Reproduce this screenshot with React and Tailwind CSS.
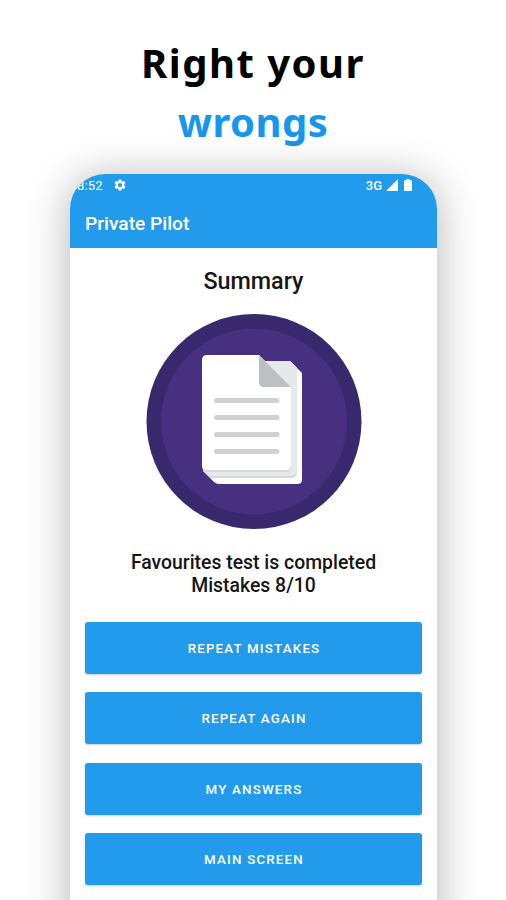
import React from 'react';
import { MdSettings } from 'react-icons/md';

const ACTIONS = ['Repeat mistakes', 'Repeat again', 'My answers', 'Main screen'];

const DocumentsIcon = () => (
  <svg viewBox="0 0 216 216" className="w-[216px] h-[216px]" fill="none">
    <circle cx="108" cy="107.5" r="107.5" fill="#38296f" />
    <circle cx="108" cy="107.5" r="93" fill="#47307f" />
    {/* Pages, back to front */}
    <path d="M62 47H144L156 59V165.500Q156 170 151.500 170H73Q70 170 68 168L57 157Z" fill="#fafbfb" />
    <path d="M62 47H144L151 54V158Q151 164 145 164H65L57 156Z" fill="#d5d7d9" />
    <path d="M62 47H144L151 54V156Q150 162 144 162H64L57 155Z" fill="#e6e8ea" />
    <path d="M60 120H145V153Q145 158 140 158H60L56 154Z" fill="#d5d7d9" />
    <path d="M61 41H113L145 73V151Q145 156 140 156H61Q59 156 58 155L57 154Q56 153 56 151V46Q56 41 61 41Z" fill="#ffffff" />
    <path d="M113 41L145 73H118Q113 73 113 68Z" fill="#bdc0c1" />
    <path d="M70.500 86.500H131M70.500 103.500H131M70.500 120.500H131M70.500 137.500H131" stroke="#cfd1d2" strokeWidth="5" strokeLinecap="round" />
  </svg>
);

const StatusBar = () => (
  <div className="flex h-[22px] items-center justify-between pl-[7px] pr-[25px] text-white">
    <div className="flex items-center gap-[10px]">
      <span className="text-[13px] leading-none tracking-[0.200px]">8:52</span>
      <MdSettings size={14} />
    </div>
    <div className="flex items-center">
      <span className="text-[13px] font-medium leading-none">3G</span>
      <svg viewBox="0 0 12 12" className="ml-[4px] h-[12px] w-[12px]" fill="currentColor">
        <path d="M0 12L12 0V12Z" />
      </svg>
      <svg viewBox="0 0 8 12" className="ml-[6px] h-[12px] w-[8px]" fill="currentColor">
        <path d="M2.500 0H5.500V1.200H7Q8 1.200 8 2.200V11Q8 12 7 12H1Q0 12 0 11V2.200Q0 1.200 1 1.200H2.500Z" />
      </svg>
    </div>
  </div>
);

const App = () => {
  return (
    <div className="flex h-[900px] w-[506px] flex-col overflow-hidden bg-white">
      <h1 className="h-[174px] shrink-0 pt-[33px] text-center font-['Noto_Sans','Open_Sans',sans-serif] text-[40px] font-bold leading-[59px] text-black">
        <span className="block tracking-[1.500px]">Right your</span>
        <span className="block tracking-[0.500px] text-[#1697eb]">wrongs</span>
      </h1>

      <div className="ml-[70px] h-[790px] w-[367px] shrink-0 overflow-hidden rounded-t-[35px] bg-white font-['Roboto',sans-serif] shadow-[0_4px_42px_2px_rgba(0,0,0,0.28)]">
        <header className="h-[74px] bg-[#239bec]">
          <StatusBar />
          <p className="pl-[15px] pt-[14px] text-[19.200px] font-medium leading-[28px] text-white">Private Pilot</p>
        </header>

        <main className="flex flex-col items-center px-[15px]">
          <h2 className="mt-[19px] text-[23.300px] font-medium leading-[28px] text-[#161616]">Summary</h2>
          <div className="mt-[19px]">
            <DocumentsIcon />
          </div>
          <p className="mt-[21px] text-center text-[19.400px] font-medium leading-[23px] text-[#161616]">
            Favourites test is completed
            <br />
            Mistakes 8/10
          </p>
          <div className="mt-[25px] flex w-full flex-col gap-[18.300px]">
            {ACTIONS.map((label) => (
              <button
                key={label}
                type="button"
                className="h-[52px] w-full rounded-[3px] bg-[#239bec] pt-[2px] pl-[1px] text-[13.300px] font-medium uppercase tracking-[1.200px] text-white shadow-[0_1px_2px_rgba(0,0,0,0.2)]"
              >
                {label}
              </button>
            ))}
          </div>
        </main>
      </div>
    </div>
  );
};

export default App;
